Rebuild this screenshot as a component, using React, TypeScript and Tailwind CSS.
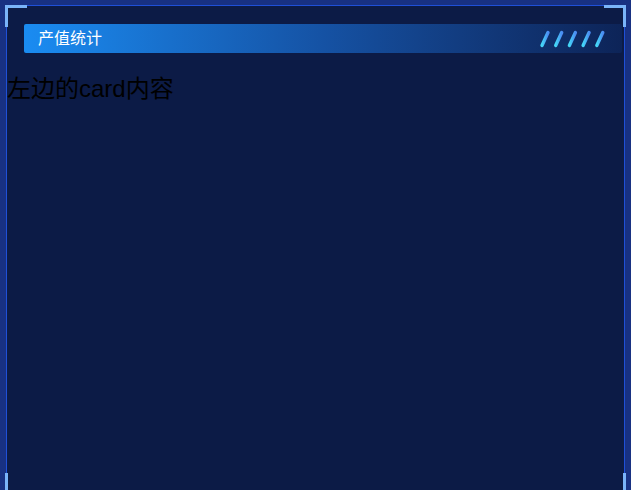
const Stripes = () => (
    <svg width="70" height="18" viewBox="0 0 70 18">
        <defs>
            <linearGradient id="stripeGrad" x1="0" y1="0" x2="1" y2="0">
                <stop offset="0%" stopColor="#44d6f7" />
                <stop offset="100%" stopColor="#4b8df3" />
            </linearGradient>
        </defs>
        {[0, 1, 2, 3, 4].map(i => (
            <line
                key={i}
                x1={4 + i * 13.7}
                y1={15.5}
                x2={10 + i * 13.7}
                y2={2.5}
                stroke="url(#stripeGrad)"
                strokeWidth="3.4"
                strokeLinecap="round"
            />
        ))}
    </svg>
);

// corner brackets drawn as two bars each
const Corner = ({ pos, h, v }: { pos: string; h: string; v: string }) => (
    <span className={`absolute w-[22px] h-[22px] ${pos}`}>
        <span className={`absolute w-[22px] h-[3px] bg-[#7ab4f9] ${h}`}></span>
        <span className={`absolute w-[3px] h-[22px] bg-[#7ab4f9] ${v}`}></span>
    </span>
);

const App = () => {
    return (
        <div className="min-h-screen bg-[#183182] pl-[6px] pt-[5px] font-['Liberation_Sans','Noto_Sans_CJK_SC',sans-serif]">
            <div className="relative w-[619px] h-[490px] bg-[#0c1b46] border border-[#1f50d8]">
                <Corner pos="-top-px -left-[2px]" h="top-0 left-0" v="top-0 left-0" />
                <Corner pos="-top-px -right-[2px]" h="top-0 right-0" v="top-0 right-0" />
                <Corner pos="-bottom-px -left-[2px]" h="bottom-0 left-0" v="bottom-0 left-0" />
                <Corner pos="-bottom-px -right-[2px]" h="bottom-0 right-0" v="bottom-0 right-0" />

                <div className="ml-[17px] mr-[2px] mt-[18px] h-[29px] rounded-[2px] flex items-center pl-[14px] pr-[14px] bg-gradient-to-r from-[#1a8cf2] via-[#1552a4] to-[#0d2458]">
                    <span className="text-white text-[16px] leading-none">产值统计</span>
                    <div className="ml-auto flex items-center">
                        <Stripes />
                    </div>
                </div>

                <div className="mt-[18px] text-[24px] text-black">左边的card内容</div>
            </div>
        </div>
    );
};

export default App;
